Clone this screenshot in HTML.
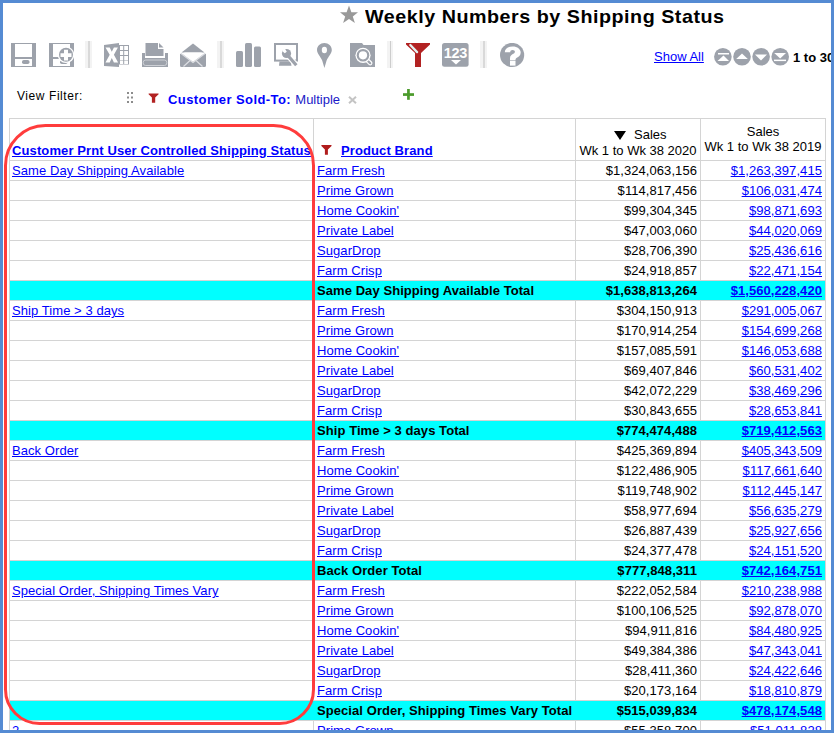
<!DOCTYPE html>
<html><head><meta charset="utf-8">
<style>
html,body{margin:0;padding:0;}
body{width:834px;height:733px;overflow:hidden;position:relative;background:#fff;font-family:"Liberation Sans",sans-serif;}
.abs{position:absolute;}
.frame{position:absolute;background:#558bd3;z-index:10;}
#title{position:absolute;left:365px;top:6px;font-size:18.5px;letter-spacing:0.5px;transform:scaleX(1.064);transform-origin:0 0;font-weight:bold;color:#000;white-space:nowrap;}
.ico{position:absolute;}
.sep{position:absolute;top:41px;width:7px;height:27px;background:#f3f3f3;}
.sep:after{content:"";position:absolute;left:3px;top:0;width:2px;height:27px;background:#d9d9d9;}
.sep.t:after{width:1px;background:#cdcdcd;}
.hl{position:absolute;height:1px;background:#d4d4d4;left:9px;width:817px;}
.vl{position:absolute;width:1px;background:#d4d4d4;top:118px;height:612px;}
.r{position:absolute;left:10px;width:815px;height:19px;font-size:13px;line-height:19px;white-space:nowrap;}
.r.tot{background:#00ffff;}
.r span{position:absolute;top:0;letter-spacing:0.07px;}
.c1{left:2px;color:#0000ff;}
.c2{left:307px;color:#0000ff;}
.c3{right:128px;color:#000;}
.c4{right:3px;color:#0000ff;}
.b{font-weight:bold;}
.tot .c2{color:#000;}
u{text-decoration:underline;}
.hdr{position:absolute;font-size:13px;line-height:15.5px;white-space:nowrap;}
.hdr.b{letter-spacing:0.11px;}
</style></head><body>
<!-- frame -->
<div class="frame" style="left:0;top:0;width:834px;height:3px"></div>
<div class="frame" style="left:0;top:0;width:3px;height:733px"></div>
<div class="frame" style="left:831px;top:0;width:3px;height:733px"></div>
<div class="frame" style="left:0;top:730px;width:834px;height:3px"></div>

<!-- title -->
<svg class="abs" style="left:339px;top:5px" width="20" height="19" viewBox="0 0 20 19"><path d="M10 0.6 L12.4 7.2 L19 7.3 L13.8 11.5 L15.9 18 L10 14.1 L4.1 18 L6.2 11.5 L1 7.3 L7.6 7.2 Z" fill="#999"/></svg>
<div id="title">Weekly Numbers by Shipping Status</div>

<!-- toolbar -->
<!-- save -->
<svg class="ico" style="left:11px;top:43px" width="25" height="24" viewBox="0 0 25 24">
<rect x="0" y="0" width="25" height="24" fill="#9da2ab"/>
<rect x="4" y="1" width="17" height="13" fill="#fff"/>
<rect x="4" y="16" width="17" height="7" fill="#fff"/>
<rect x="11" y="17" width="7.5" height="4" rx="1.8" fill="#9da2ab"/>
</svg>
<!-- save as -->
<svg class="ico" style="left:49px;top:43px" width="25" height="24" viewBox="0 0 25 24">
<rect x="0" y="0" width="25" height="24" fill="#9da2ab"/>
<rect x="4" y="1" width="17" height="13" fill="#fff"/>
<rect x="4" y="16" width="17" height="7" fill="#fff"/>
<rect x="11" y="17" width="7.5" height="4" rx="1.8" fill="#9da2ab"/>
<circle cx="17" cy="11.8" r="8.3" fill="#fff"/>
<circle cx="17" cy="11.8" r="7" fill="#9da2ab"/>
<path d="M15 6.8h4v3.5h3.5v3.6h-3.5v3.5h-4v-3.5h-3.5v-3.6h3.5z" fill="#fff"/>
</svg>
<div class="sep" style="left:85px"></div>
<!-- excel -->
<svg class="ico" style="left:104px;top:43px" width="25" height="24" viewBox="0 0 25 24">
<path d="M0 2 L15 0 L15 24 L0 23 Z" fill="#9da2ab"/>
<path d="M1.5 4.5 h4.2 l2.1 4.2 l2.1 -4.2 h4 l-4 7.2 l4.2 7.8 h-4.2 l-2.1 -4.5 l-2.1 4.5 h-4.2 l4.2 -7.8 z" fill="#fff"/>
<rect x="15" y="2" width="10" height="19.5" fill="#9da2ab"/>
<g fill="#fff"><rect x="16" y="3" width="3.2" height="4"/><rect x="20.2" y="3" width="3.8" height="4"/>
<rect x="16" y="8" width="3.2" height="4"/><rect x="20.2" y="8" width="3.8" height="4"/>
<rect x="16" y="13" width="3.2" height="4"/><rect x="20.2" y="13" width="3.8" height="4"/>
<rect x="16" y="17.5" width="3.2" height="3.5"/><rect x="20.2" y="17.5" width="3.8" height="3.5"/></g>
</svg>
<!-- printer -->
<svg class="ico" style="left:142px;top:43px" width="26" height="24" viewBox="0 0 26 24">
<rect x="0" y="10" width="26" height="14" fill="#9da2ab"/>
<rect x="3" y="10" width="20" height="5" fill="#fff"/>
<path d="M3.5 0 H16 V6 H21.5 V13 H3.5 Z" fill="#9da2ab"/>
<path d="M17 0 L21.5 4.5 H17 Z" fill="#9da2ab"/>
<rect x="1.2" y="17" width="23.6" height="5.5" rx="2.5" fill="none" stroke="#cdd0d5" stroke-width="1"/>
</svg>
<!-- envelope -->
<svg class="ico" style="left:180px;top:43px" width="26" height="24" viewBox="0 0 26 24">
<path d="M13 0.5 L24.5 9.5 H1.5 Z" fill="#9da2ab"/>
<path d="M0 11 L1.5 10.5 L13 19 L24.5 10.5 L26 11 V22.5 Q26 24 24.5 24 H1.5 Q0 24 0 22.5 Z" fill="#9da2ab"/>
<path d="M4 9.5 H22 L13 17.5 Z" fill="#fff"/>
<path d="M1 10.5 L13 19.5 L25 10.5" fill="none" stroke="#dcdee2" stroke-width="1.2"/>
<path d="M3.5 23.5 L10 17.5 M22.5 23.5 L16 17.5" stroke="#dcdee2" stroke-width="1.2"/>
</svg>
<div class="sep" style="left:217px"></div>
<!-- bar chart -->
<svg class="ico" style="left:236px;top:43px" width="26" height="24" viewBox="0 0 26 24">
<rect x="0" y="8" width="7" height="16" rx="1.5" fill="#9da2ab"/>
<rect x="9" y="0" width="7" height="24" rx="1.5" fill="#9da2ab"/>
<rect x="18" y="3.5" width="7" height="20.5" rx="1.5" fill="#9da2ab"/>
</svg>
<!-- monitor wrench -->
<svg class="ico" style="left:274px;top:43px" width="25" height="25" viewBox="0 0 25 25">
<rect x="1" y="1" width="22" height="16.6" fill="none" stroke="#9da2ab" stroke-width="2"/>
<path d="M5.5 18.6 H16.8 L17.5 22.7 H5 Z" fill="#9da2ab"/>
<path d="M13 11.5 L22.5 22.5" stroke="#fff" stroke-width="5.5"/>
<path d="M13 11.5 L22.3 22.3" stroke="#9da2ab" stroke-width="3.2"/>
<circle cx="12.5" cy="10.5" r="4.6" fill="#9da2ab"/>
<path d="M8 7.8 L10.7 10.3 L12.8 8.7 L10.8 5.6 Z" fill="#fff"/>
</svg>
<!-- map pin -->
<svg class="ico" style="left:317px;top:43px" width="15" height="26" viewBox="0 0 15 26">
<path d="M7.4 0 C3.3 0 0 3.1 0 7 C0 10.6 3.5 13.5 5.2 17.5 L7.4 25 L9.6 17.5 C11.3 13.5 14.8 10.6 14.8 7 C14.8 3.1 11.5 0 7.4 0 Z" fill="#9da2ab"/>
<ellipse cx="7.4" cy="7" rx="2.6" ry="3.3" fill="#fff"/>
</svg>
<!-- folder search -->
<svg class="ico" style="left:350px;top:43px" width="25" height="24" viewBox="0 0 25 24">
<path d="M0 0 H12 L13.5 2 H25 V24 H0 Z" fill="#9da2ab"/>
<line x1="15.5" y1="15.5" x2="20.2" y2="20.2" stroke="#fff" stroke-width="4.5" stroke-linecap="round"/>
<line x1="15.5" y1="15.5" x2="20.2" y2="20.2" stroke="#9da2ab" stroke-width="2.2" stroke-linecap="round"/>
<circle cx="13" cy="12.3" r="7.6" fill="#fff"/>
<circle cx="13" cy="12.3" r="6.3" fill="#9da2ab"/>
<circle cx="13" cy="12.3" r="4.1" fill="#fff"/>
</svg>
<div class="sep t" style="left:387px;width:6px"></div>
<!-- red funnel -->
<svg class="ico" style="left:406px;top:43px" width="25" height="24" viewBox="0 0 25 24">
<path d="M0 0 H24 V1.5 L15 10 V24 H9 V10 L0 1.5 Z" fill="#b22222"/>
<line x1="4.3" y1="2" x2="11.1" y2="9.1" stroke="#e4f2f2" stroke-width="2.3" stroke-linecap="round"/>
</svg>
<!-- 123 -->
<svg class="ico" style="left:442px;top:43px" width="27" height="24" viewBox="0 0 27 24">
<rect x="0" y="0" width="26.6" height="23.8" rx="2.5" fill="#9da2ab"/>
<text x="13.3" y="14.8" font-family="Liberation Sans" font-weight="bold" font-size="14.5" letter-spacing="-0.4" fill="#fff" text-anchor="middle">123</text>
<path d="M9 17 H19 L14 21.5 Z" fill="#fff"/>
</svg>
<div class="sep" style="left:480px"></div>
<!-- help -->
<svg class="ico" style="left:500px;top:43px" width="25" height="25" viewBox="0 0 25 25">
<circle cx="12.1" cy="12" r="12.1" fill="#9da2ab"/>
<path d="M4.8 9.2 C4.8 5.5 8 3.4 12.7 3.4 C17.4 3.4 20.7 6 20.7 9.5 C20.7 12.6 18.5 13.8 16.8 14.8 C15.8 15.4 15.5 16 15.5 17 L10 17 L10 15.2 C10 12.8 11.6 11.8 13.3 10.8 C14.3 10.2 14.9 9.6 14.9 8.7 C14.9 7.6 13.9 6.9 12.6 6.9 C11.2 6.9 10.2 7.8 10.2 9.2 Z" fill="#fff"/>
<rect x="10" y="17.6" width="5.5" height="5" fill="#fff"/>
</svg>

<div class="abs" style="left:654px;top:49px;font-size:13px;color:#0000ff;text-decoration:underline;white-space:nowrap">Show All</div>
<svg class="ico" style="left:714px;top:47.5px" width="76" height="18" viewBox="0 0 76 18">
<g fill="#9da2ab"><circle cx="8.9" cy="8.8" r="8.8"/><circle cx="28" cy="8.8" r="8.8"/><circle cx="47.1" cy="8.8" r="8.8"/><circle cx="66.2" cy="8.8" r="8.8"/></g>
<g fill="#fff">
<rect x="4" y="5" width="11" height="1.5"/><path d="M9.5 7.5 L15 13 H3.5 Z"/>
<path d="M28 5.5 L33.8 11 H22.2 Z"/>
<path d="M47 12.6 L53 6.5 H41 Z"/>
<path d="M66.2 10.6 L72 5 H60.2 Z"/><rect x="60" y="11.6" width="12" height="1.5"/>
</g>
</svg>
<div class="abs" style="left:793px;top:50px;font-size:13px;font-weight:bold;color:#000;white-space:nowrap">1 to 30</div>

<!-- view filter -->
<div class="abs" style="left:17px;top:89px;font-size:12px;letter-spacing:0.57px;color:#000;white-space:nowrap">View Filter:</div>
<svg class="ico" style="left:127px;top:92px" width="7" height="12" viewBox="0 0 7 12">
<g fill="#8c8c8c"><rect x="0" y="0" width="2" height="2"/><rect x="4" y="0" width="2" height="2"/>
<rect x="0" y="4.5" width="2" height="2"/><rect x="4" y="4.5" width="2" height="2"/>
<rect x="0" y="9" width="2" height="2"/><rect x="4" y="9" width="2" height="2"/></g>
</svg>
<svg class="ico" style="left:148px;top:93px" width="12" height="11" viewBox="0 0 12 11">
<path d="M0.9 0.4 H10.3 Q10.9 0.4 10.6 1.3 L7.2 4.6 V9.8 H3.9 V4.6 L0.6 1.3 Q0.3 0.4 0.9 0.4 Z" fill="#b22222"/>
</svg>
<div class="abs" style="left:168px;top:92px;font-size:13px;font-weight:bold;letter-spacing:0.41px;color:#0000ff;white-space:nowrap">Customer Sold-To:</div>
<div class="abs" style="left:295.3px;top:92px;font-size:13px;color:#1a1ac8;white-space:nowrap">Multiple</div>
<svg class="ico" style="left:348px;top:96px" width="9" height="8" viewBox="0 0 9 8">
<path d="M1 0.8 L8 7.2 M8 0.8 L1 7.2" stroke="#c4c4c4" stroke-width="2"/>
</svg>
<svg class="ico" style="left:403px;top:89px" width="11" height="11" viewBox="0 0 11 11">
<rect x="4.1" y="0" width="2.7" height="10.8" fill="#4b9b2b"/><rect x="0" y="4.2" width="11" height="2.7" fill="#4b9b2b"/>
</svg>

<!-- table grid -->
<div class="hl" style="top:118px"></div>
<div class="hl" style="top:160px"></div>
<div class="vl" style="left:9px"></div>
<div class="vl" style="left:313px"></div>
<div class="vl" style="left:575px"></div>
<div class="vl" style="left:700px"></div>
<div class="vl" style="left:825px"></div>
<div class="hl" style="top:180px"></div>
<div class="hl" style="top:200px"></div>
<div class="hl" style="top:220px"></div>
<div class="hl" style="top:240px"></div>
<div class="hl" style="top:260px"></div>
<div class="hl" style="top:280px"></div>
<div class="hl" style="top:300px"></div>
<div class="hl" style="top:320px"></div>
<div class="hl" style="top:340px"></div>
<div class="hl" style="top:360px"></div>
<div class="hl" style="top:380px"></div>
<div class="hl" style="top:400px"></div>
<div class="hl" style="top:420px"></div>
<div class="hl" style="top:440px"></div>
<div class="hl" style="top:460px"></div>
<div class="hl" style="top:480px"></div>
<div class="hl" style="top:500px"></div>
<div class="hl" style="top:520px"></div>
<div class="hl" style="top:540px"></div>
<div class="hl" style="top:560px"></div>
<div class="hl" style="top:580px"></div>
<div class="hl" style="top:600px"></div>
<div class="hl" style="top:620px"></div>
<div class="hl" style="top:640px"></div>
<div class="hl" style="top:660px"></div>
<div class="hl" style="top:680px"></div>
<div class="hl" style="top:700px"></div>
<div class="hl" style="top:720px"></div>

<!-- header -->
<div class="hdr b" style="left:12px;top:143px;color:#0000ff;text-decoration:underline">Customer Prnt User Controlled Shipping Status</div>
<svg class="ico" style="left:321px;top:144px" width="12" height="12" viewBox="0 0 12 12">
<path d="M0.7 1 H10.2 Q10.8 1 10.5 1.9 L6.9 5.5 V10.8 H3.9 V5.5 L0.4 1.9 Q0.1 1 0.7 1 Z" fill="#b01c1c"/>
</svg>
<div class="hdr b" style="left:341px;top:143px;color:#0000ff;text-decoration:underline">Product Brand</div>
<svg class="ico" style="left:613.5px;top:130.5px" width="12" height="9" viewBox="0 0 12 9"><path d="M0 0 H12 L6 9 Z" fill="#000"/></svg>
<div class="hdr" style="left:634px;top:127px;color:#000">Sales</div>
<div class="hdr" style="left:576px;top:143px;width:124px;text-align:center;color:#000">Wk 1 to Wk 38 2020</div>
<div class="hdr" style="left:701px;top:123.5px;width:124px;text-align:center;color:#000">Sales<br>Wk 1 to Wk 38 2019</div>

<div class="r" style="top:161px"><span class="c1"><u>Same Day Shipping Available</u></span><span class="c2"><u>Farm Fresh</u></span><span class="c3">$1,324,063,156</span><span class="c4"><u>$1,263,397,415</u></span></div>
<div class="r" style="top:181px"><span class="c2"><u>Prime Grown</u></span><span class="c3">$114,817,456</span><span class="c4"><u>$106,031,474</u></span></div>
<div class="r" style="top:201px"><span class="c2"><u>Home Cookin'</u></span><span class="c3">$99,304,345</span><span class="c4"><u>$98,871,693</u></span></div>
<div class="r" style="top:221px"><span class="c2"><u>Private Label</u></span><span class="c3">$47,003,060</span><span class="c4"><u>$44,020,069</u></span></div>
<div class="r" style="top:241px"><span class="c2"><u>SugarDrop</u></span><span class="c3">$28,706,390</span><span class="c4"><u>$25,436,616</u></span></div>
<div class="r" style="top:261px"><span class="c2"><u>Farm Crisp</u></span><span class="c3">$24,918,857</span><span class="c4"><u>$22,471,154</u></span></div>
<div class="r tot" style="top:281px"><span class="c2 b">Same Day Shipping Available Total</span><span class="c3 b">$1,638,813,264</span><span class="c4 b"><u>$1,560,228,420</u></span></div>
<div class="r" style="top:301px"><span class="c1"><u>Ship Time &gt; 3 days</u></span><span class="c2"><u>Farm Fresh</u></span><span class="c3">$304,150,913</span><span class="c4"><u>$291,005,067</u></span></div>
<div class="r" style="top:321px"><span class="c2"><u>Prime Grown</u></span><span class="c3">$170,914,254</span><span class="c4"><u>$154,699,268</u></span></div>
<div class="r" style="top:341px"><span class="c2"><u>Home Cookin'</u></span><span class="c3">$157,085,591</span><span class="c4"><u>$146,053,688</u></span></div>
<div class="r" style="top:361px"><span class="c2"><u>Private Label</u></span><span class="c3">$69,407,846</span><span class="c4"><u>$60,531,402</u></span></div>
<div class="r" style="top:381px"><span class="c2"><u>SugarDrop</u></span><span class="c3">$42,072,229</span><span class="c4"><u>$38,469,296</u></span></div>
<div class="r" style="top:401px"><span class="c2"><u>Farm Crisp</u></span><span class="c3">$30,843,655</span><span class="c4"><u>$28,653,841</u></span></div>
<div class="r tot" style="top:421px"><span class="c2 b">Ship Time &gt; 3 days Total</span><span class="c3 b">$774,474,488</span><span class="c4 b"><u>$719,412,563</u></span></div>
<div class="r" style="top:441px"><span class="c1"><u>Back Order</u></span><span class="c2"><u>Farm Fresh</u></span><span class="c3">$425,369,894</span><span class="c4"><u>$405,343,509</u></span></div>
<div class="r" style="top:461px"><span class="c2"><u>Home Cookin'</u></span><span class="c3">$122,486,905</span><span class="c4"><u>$117,661,640</u></span></div>
<div class="r" style="top:481px"><span class="c2"><u>Prime Grown</u></span><span class="c3">$119,748,902</span><span class="c4"><u>$112,445,147</u></span></div>
<div class="r" style="top:501px"><span class="c2"><u>Private Label</u></span><span class="c3">$58,977,694</span><span class="c4"><u>$56,635,279</u></span></div>
<div class="r" style="top:521px"><span class="c2"><u>SugarDrop</u></span><span class="c3">$26,887,439</span><span class="c4"><u>$25,927,656</u></span></div>
<div class="r" style="top:541px"><span class="c2"><u>Farm Crisp</u></span><span class="c3">$24,377,478</span><span class="c4"><u>$24,151,520</u></span></div>
<div class="r tot" style="top:561px"><span class="c2 b">Back Order Total</span><span class="c3 b">$777,848,311</span><span class="c4 b"><u>$742,164,751</u></span></div>
<div class="r" style="top:581px"><span class="c1"><u>Special Order, Shipping Times Vary</u></span><span class="c2"><u>Farm Fresh</u></span><span class="c3">$222,052,584</span><span class="c4"><u>$210,238,988</u></span></div>
<div class="r" style="top:601px"><span class="c2"><u>Prime Grown</u></span><span class="c3">$100,106,525</span><span class="c4"><u>$92,878,070</u></span></div>
<div class="r" style="top:621px"><span class="c2"><u>Home Cookin'</u></span><span class="c3">$94,911,816</span><span class="c4"><u>$84,480,925</u></span></div>
<div class="r" style="top:641px"><span class="c2"><u>Private Label</u></span><span class="c3">$49,384,386</span><span class="c4"><u>$47,343,041</u></span></div>
<div class="r" style="top:661px"><span class="c2"><u>SugarDrop</u></span><span class="c3">$28,411,360</span><span class="c4"><u>$24,422,646</u></span></div>
<div class="r" style="top:681px"><span class="c2"><u>Farm Crisp</u></span><span class="c3">$20,173,164</span><span class="c4"><u>$18,810,879</u></span></div>
<div class="r tot" style="top:701px"><span class="c2 b">Special Order, Shipping Times Vary Total</span><span class="c3 b">$515,039,834</span><span class="c4 b"><u>$478,174,548</u></span></div>
<div class="r" style="top:721px"><span class="c1"><u>2</u></span><span class="c2"><u>Prime Grown</u></span><span class="c3">$55,358,700</span><span class="c4"><u>$51,011,828</u></span></div>

<!-- red highlight -->
<svg class="abs" style="left:0;top:0" width="834" height="733" viewBox="0 0 834 733">
<path d="M45.5 125.5 H273.5 A40 40 0 0 1 313.5 165.5 V689.5 A34 34 0 0 1 279.5 723.5 H39.5 A34 34 0 0 1 5.5 689.5 V165.5 A40 40 0 0 1 45.5 125.5 Z" fill="none" stroke="#ff3c3c" stroke-width="3"/>
</svg>
</body></html>
